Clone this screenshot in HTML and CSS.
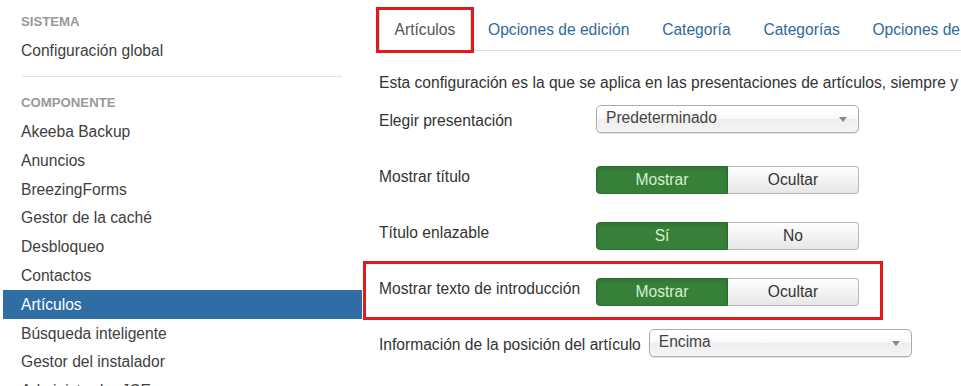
FILE: index.html
```html
<!DOCTYPE html>
<html lang="es">
<head>
  <meta charset="UTF-8">
  <meta name="viewport" content="width=device-width, initial-scale=1.0">
  <title>Opciones - Artículos</title>
  <link rel="stylesheet" href="styles.css">
</head>
<body>

  <div class="page">
    <div class="sidebar">
      <ul class="nav-list">
        <li class="nav-header">Sistema</li>
        <li><a href="#">Configuración global</a></li>
        <li class="divider"></li>
        <li class="nav-header">Componente</li>
        <li><a href="#">Akeeba Backup</a></li>
        <li><a href="#">Anuncios</a></li>
        <li><a href="#">BreezingForms</a></li>
        <li><a href="#">Gestor de la caché</a></li>
        <li><a href="#">Desbloqueo</a></li>
        <li><a href="#">Contactos</a></li>
        <li class="active"><a href="#">Artículos</a></li>
        <li><a href="#">Búsqueda inteligente</a></li>
        <li><a href="#">Gestor del instalador</a></li>
        <li><a href="#">Administrador JCE</a></li>
      </ul>
    </div>

    <div class="content">
      <ul class="tabs">
        <li class="active"><a href="#">Artículos</a></li>
        <li><a href="#">Opciones de edición</a></li>
        <li><a href="#">Categoría</a></li>
        <li><a href="#">Categorías</a></li>
        <li><a href="#">Opciones de blog/destacados</a></li>
      </ul>

      <p class="intro">Esta configuración es la que se aplica en las presentaciones de artículos, siempre y cuando no se cambie en un elemento de menú específico.</p>

      <div class="control-group first">
        <label class="control-label">Elegir presentación</label>
        <div class="select"><span>Predeterminado</span><b class="arrow"></b></div>
      </div>

      <div class="control-group toggle">
        <label class="control-label">Mostrar título</label>
        <div class="btn-group">
          <button class="btn on">Mostrar</button>
          <button class="btn">Ocultar</button>
        </div>
      </div>

      <div class="control-group toggle">
        <label class="control-label">Título enlazable</label>
        <div class="btn-group">
          <button class="btn on">Sí</button>
          <button class="btn">No</button>
        </div>
      </div>

      <div class="control-group toggle tight">
        <label class="control-label">Mostrar texto de introducción</label>
        <div class="btn-group">
          <button class="btn on">Mostrar</button>
          <button class="btn">Ocultar</button>
        </div>
      </div>

      <div class="control-group inline">
        <label class="control-label">Información de la posición del artículo</label>
        <div class="select"><span>Encima</span><b class="arrow"></b></div>
      </div>
    </div>

    <!-- highlight boxes drawn over the screenshot -->
    <div class="mark mark-tab"></div>
    <div class="mark mark-row"></div>
  </div>

</body>
</html>
```

FILE: styles.css
```css
body {
  margin: 0;
  padding: 0;
  font-family: "Liberation Sans", Arial, sans-serif;
  font-size: 15.6px;
  line-height: 21.6px;
  color: #333;
  background: #fff;
  overflow: hidden;
}

.page {
  position: relative;
  display: flex;
  padding-left: 3px;
  height: 386px;
}

/* sidebar */
.sidebar {
  width: 359px;
  flex-shrink: 0;
  padding-top: 7.6px;
}

.nav-list {
  list-style: none;
  margin: 0;
  padding: 0;
}

.nav-list li a,
.nav-header {
  display: block;
  padding: 3.6px 18px;
  white-space: nowrap;
}

.nav-list li a {
  color: #404040;
  text-decoration: none;
}

.nav-header {
  font-size: 13.2px;
  font-weight: bold;
  text-transform: uppercase;
  color: #999;
  text-shadow: 0 1px 0 rgba(255, 255, 255, 0.5);
}

.nav-list .active a {
  background-color: #2f6ea5;
  color: #fff;
}

.divider {
  height: 1px;
  margin: 10.8px 20px 10.8px 19px;
  background-color: #e3e3e3;
  border-bottom: 1px solid #fff;
}

/* main */
.content {
  flex: 1;
  min-width: 0;
  margin-left: 17px;
  padding-top: 8.2px;
}

.tabs {
  list-style: none;
  margin: 0;
  padding: 0;
  display: flex;
  border-bottom: 1px solid #ddd;
  white-space: nowrap;
}

.tabs li {
  margin-bottom: -1px;
}

.tabs a {
  display: block;
  padding: 9.6px 15px 9.6px 14.6px;
  margin-right: 1.2px;
  border: 1px solid transparent;
  border-radius: 4px 4px 0 0;
  color: #31699a;
  text-decoration: none;
}

.tabs .active a {
  color: #555;
  background: #fff;
  border-color: #ddd #ddd transparent;
}

.intro {
  margin: 21px 0 11.4px;
  white-space: nowrap;
}

.control-group {
  display: flex;
  align-items: flex-start;
  margin-bottom: 28px;
}

.control-group.first {
  margin-bottom: 33px;
}

.control-group.tight {
  margin-bottom: 23px;
}

.control-label {
  width: 217px;
  flex-shrink: 0;
  padding-top: 5.5px;
  white-space: nowrap;
}

.toggle .control-label {
  padding-top: 0;
}

.inline .control-label {
  width: auto;
  margin-right: 8px;
}

/* chosen style select */
.select {
  position: relative;
  box-sizing: border-box;
  width: 263px;
  height: 28px;
  padding: 0 9px;
  line-height: 26px;
  color: #444;
  border: 1px solid #aaa;
  border-radius: 5px;
  background: linear-gradient(#fff 20%, #f7f7f7 50%, #eee 52%, #f4f4f4);
  box-shadow: inset 0 0 3px #fff, 0 1px 1px rgba(0, 0, 0, 0.1);
}

.select span {
  position: relative;
  top: -1px;
}

.arrow {
  position: absolute;
  right: 11px;
  top: 11px;
  border-left: 4px solid transparent;
  border-right: 4px solid transparent;
  border-top: 5px solid #888;
}

/* yes / no toggles */
.btn-group {
  display: flex;
  width: 263px;
}

.btn {
  flex: 1;
  height: 28px;
  margin: 0;
  padding: 0;
  font-family: inherit;
  font-size: 15.6px;
  color: #333;
  border: 1px solid #b8b8b8;
  border-left-width: 0;
  background: linear-gradient(#fff, #e6e6e6);
  border-radius: 0 4px 4px 0;
}

.btn.on {
  color: #d4f2cc;
  border: 1px solid #2b6a2d;
  background: #37803a;
  border-radius: 4px 0 0 4px;
  box-shadow: inset 0 2px 4px rgba(0, 0, 0, 0.12);
}

/* red annotation boxes */
.mark {
  position: absolute;
  border: 3px solid #e2191c;
  box-sizing: border-box;
}

.mark-tab {
  left: 376px;
  top: 7px;
  width: 98px;
  height: 46px;
}

.mark-row {
  left: 363px;
  top: 261px;
  width: 520px;
  height: 59px;
}
```
